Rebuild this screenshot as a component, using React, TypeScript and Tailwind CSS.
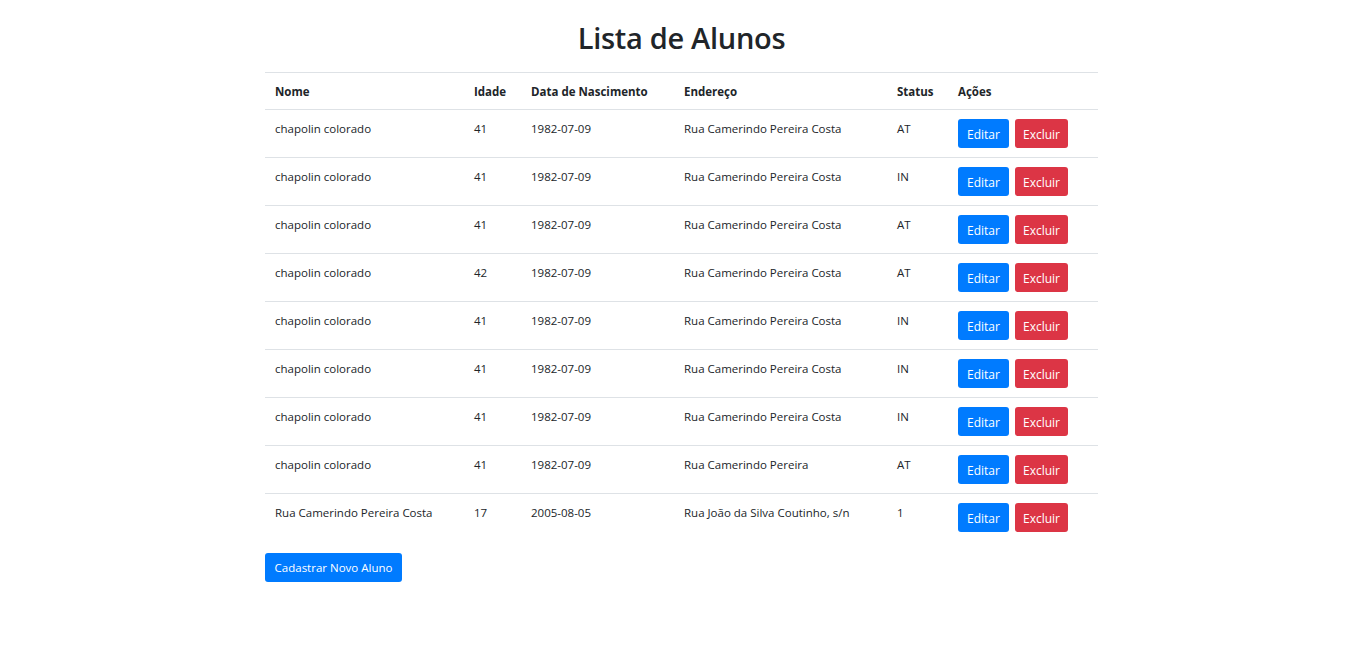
import React from "react";

const rows = [
  ["chapolin colorado", "41", "1982-07-09", "Rua Camerindo Pereira Costa", "AT"],
  ["chapolin colorado", "41", "1982-07-09", "Rua Camerindo Pereira Costa", "IN"],
  ["chapolin colorado", "41", "1982-07-09", "Rua Camerindo Pereira Costa", "AT"],
  ["chapolin colorado", "42", "1982-07-09", "Rua Camerindo Pereira Costa", "AT"],
  ["chapolin colorado", "41", "1982-07-09", "Rua Camerindo Pereira Costa", "IN"],
  ["chapolin colorado", "41", "1982-07-09", "Rua Camerindo Pereira Costa", "IN"],
  ["chapolin colorado", "41", "1982-07-09", "Rua Camerindo Pereira Costa", "IN"],
  ["chapolin colorado", "41", "1982-07-09", "Rua Camerindo Pereira", "AT"],
  ["Rua Camerindo Pereira Costa", "17", "2005-08-05", "Rua João da Silva Coutinho, s/n", "1"],
];

export default function App() {
  return (
    <div
      className="min-h-[648px] bg-white text-[#212529]"
      style={{ fontFamily: '"Open Sans", "Noto Sans", sans-serif' }}
    >
      <div className="mx-auto w-[833px] pt-[19px]">
        <h1 className="text-center text-[29px] leading-[38px] font-semibold tracking-[-0.3px] text-[#212529]">
          Lista de Alunos
        </h1>
        <table className="mt-[15px] w-full table-fixed border-collapse text-[11.5px] leading-[19px]">
          <colgroup>
            <col className="w-[199px]" />
            <col className="w-[57px]" />
            <col className="w-[153px]" />
            <col className="w-[213px]" />
            <col className="w-[61px]" />
            <col className="w-[150px]" />
          </colgroup>
          <thead>
            <tr className="h-[37px] border-t border-b border-[#dee2e6]">
              {["Nome", "Idade", "Data de Nascimento", "Endereço", "Status", "Ações"].map((h) => (
                <th key={h} className="px-[10px] text-left align-middle font-bold">
                  {h}
                </th>
              ))}
            </tr>
          </thead>
          <tbody>
            {rows.map((r, i) => (
              <tr key={i} className={i > 0 ? "h-[48px] border-t border-[#dee2e6]" : "h-[48px]"}>
                {r.map((c, j) => (
                  <td key={j} className="px-[10px] pt-[9px] align-top">
                    {c}
                  </td>
                ))}
                <td className="px-[10px] pt-[9px] align-top">
                  <div className="flex gap-[6px]">
                    <button className="h-[29px] w-[51px] rounded-[3px] bg-[#007bff] pt-[1px] text-[12px] text-white">
                      Editar
                    </button>
                    <button className="h-[29px] w-[53px] rounded-[3px] bg-[#dc3545] pt-[1px] text-[12px] text-white">
                      Excluir
                    </button>
                  </div>
                </td>
              </tr>
            ))}
          </tbody>
        </table>
        <button className="mt-[11px] h-[29px] w-[137px] rounded-[3px] bg-[#007bff] pt-[1px] text-[11.5px] text-white">
          Cadastrar Novo Aluno
        </button>
      </div>
    </div>
  );
}
